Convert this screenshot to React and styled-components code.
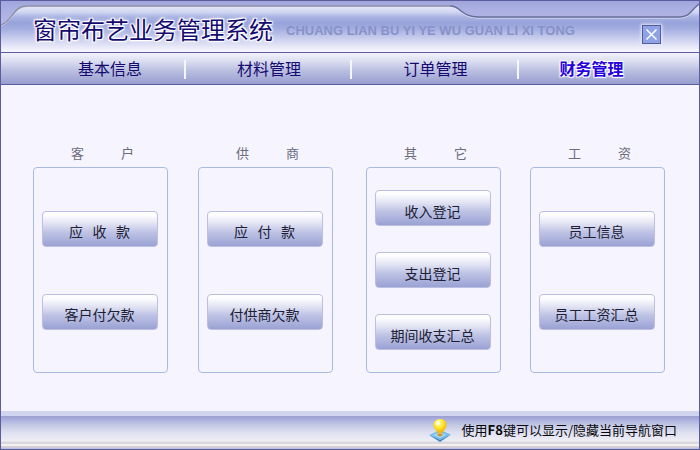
import React from "react";
import styled, { createGlobalStyle } from "styled-components";

const sans = '"Noto Sans CJK SC", "Liberation Sans", sans-serif';

const GlobalStyle = createGlobalStyle`
  *, *::before, *::after { box-sizing: border-box; }
  body { margin: 0; background: #f6f4fe; font-family: ${sans}; }
  button { font-family: inherit; cursor: pointer; }
`;

const Window = styled.div`
  min-height: 100vh;
  display: flex;
  flex-direction: column;
  border: 1px solid #5a5c9e;
  background: #f6f4fe;
`;

const Header = styled.header`
  position: relative;
  height: 52px;
  display: flex;
  align-items: center;
  padding: 4px 38px 0 32px;
  border-bottom: 1px solid #5a5c9e;
  background: linear-gradient(#e2e4f8 6px, #d2d6f2 11px, #aab4e2 16px, #96a2da 22px, #a4aee0 28px, #cfd3ef 39px, #f6f5fd 50px);
`;

const HeaderArt = styled.svg`
  position: absolute;
  top: 0;
  left: 0;
  width: 100%;
  height: 28px;
`;

const Title = styled.h1`
  position: relative;
  margin: 0;
  font-size: 24px;
  line-height: 32px;
  font-weight: 400;
  color: #140a70;
  white-space: nowrap;
  text-shadow: 0 0 1px #fff, 1px 1px 1px #fff, -1px -1px 1px #fff, 1px -1px 1px #fff,
    -1px 1px 1px #fff, 0 0 4px #fff;
`;

const Subtitle = styled.span`
  position: relative;
  margin: 4px 0 0 13px;
  font: bold 13px/20px "Liberation Sans", sans-serif;
  color: #8892c9;
  white-space: nowrap;
`;

const CloseButton = styled.button`
  position: relative;
  display: flex;
  align-items: center;
  justify-content: center;
  width: 19px;
  height: 19px;
  margin-left: auto;
  margin-top: 12px;
  padding: 0;
  border: 1px solid #555c9e;
  background: #8ea2e4;
  box-shadow: 0 0 3px 1px #e8ebff;
`;

const Nav = styled.nav`
  display: grid;
  grid-template-columns: 152fr 166fr 167fr 145fr;
  height: 32px;
  padding: 0 35px 0 33px;
  border-bottom: 1px solid #5a5c9e;
  background: linear-gradient(#f3f2fb, #dcdef1 8px, #b9bee0 18px, #989ed0);
`;

const NavItem = styled.button`
  position: relative;
  border: 0;
  padding: 0 0 2px;
  background: none;
  font-size: 16px;
  line-height: 24px;
  font-weight: ${(p) => (p.$active ? 700 : 400)};
  color: ${(p) => (p.$active ? "#2600dc" : "#140a70")};
  text-shadow: ${(p) =>
    p.$active ? "1px 1px 1px #fff, -1px -1px 1px #fff, 1px -1px 1px #fff, -1px 1px 1px #fff" : "none"};

  &:not(:last-child)::after {
    content: "";
    position: absolute;
    top: 7px;
    right: 0;
    width: 2px;
    height: 19px;
    background: #f6f6fd;
  }
`;

const Main = styled.main`
  flex: 1;
  display: grid;
  grid-template-columns: 165fr 168fr 164fr 135fr;
  align-content: start;
  padding: 58px 34px 36px 32px;
`;

const Group = styled.section`
  width: 135px;
`;

const GroupTitle = styled.h2`
  display: flex;
  justify-content: space-between;
  width: 63px;
  margin: 0 auto 4px 38px;
  font-size: 13px;
  line-height: 20px;
  font-weight: 400;
  color: #6c6d7c;
`;

const Panel = styled.div`
  display: flex;
  flex-direction: column;
  justify-content: center;
  align-items: center;
  gap: ${(p) => (p.$dense ? 26 : 47)}px;
  min-height: 206px;
  padding-right: 2px;
  border: 1px solid #a9bbe4;
  border-radius: 4px;
`;

const ActionButton = styled.button`
  width: 116px;
  height: 36px;
  padding: 5px 0 0;
  border: 1px solid #bcc0e0;
  border-radius: 4px;
  background: linear-gradient(#fefeff 3px, #e4e5f4 11px, #bfc4e5 20px, #9aa2d4);
  font-size: 14px;
  line-height: 20px;
  color: #202034;
  white-space: pre;
`;

const Footer = styled.footer`
  display: flex;
  align-items: center;
  justify-content: flex-end;
  gap: 10px;
  height: 38px;
  padding: 0 22px 6px 16px;
  border-top: 5px solid #d0d4ee;
  background: linear-gradient(#9a9fce, #acb2df 4px, #c7cce5 10px, #e0e1f1 17px, #efeef5 25px,
    #d8d8de 26px, #d8d8de 28px, #f5f2ee 28px, #f5f2ee 30px, #d6ced4 30px, #cfcbda 32px, #a8b4de 33px);
`;

const Hint = styled.p`
  margin: 0;
  font-size: 13px;
  line-height: 20px;
  color: #08080c;
  white-space: nowrap;
`;

const navItems = ["基本信息", "材料管理", "订单管理", "财务管理"];

const groups = [
  { title: "客户", actions: ["应   收   款", "客户付欠款"] },
  { title: "供商", actions: ["应   付   款", "付供商欠款"] },
  { title: "其它", actions: ["收入登记", "支出登记", "期间收支汇总"] },
  { title: "工资", actions: ["员工信息", "员工工资汇总"] },
];

function Bulb() {
  return (
    <svg width="24" height="24" viewBox="0 0 24 24" aria-hidden="true">
      <defs>
        <radialGradient id="glass" cx="0.4" cy="0.3" r="0.7">
          <stop offset="0" stopColor="#fffbb0" />
          <stop offset="0.5" stopColor="#ffe629" />
          <stop offset="1" stopColor="#eeb000" />
        </radialGradient>
      </defs>
      <path d="M1 17 12 12 23 16.5 12 23Z" fill="#79bdec" />
      <path d="M1 17 12 22 23 16.5 12 24Z" fill="#4388bd" />
      <path d="M5 17 12 14 18 17 12 20Z" fill="#a4d9f7" />
      <path d="M9.500 13h5v4.500q-2.500 2-5 0Z" fill="#c59b37" />
      <path d="M9.500 15h5" stroke="#f5dd87" />
      <path d="M12 1C8 1 5.500 3.500 5.500 7c0 3 2.500 4.500 3.500 7q3 1.500 6 0C16 11.500 18.500 10 18.500 7c0-3.500-2.500-6-6.500-6Z" fill="url(#glass)" />
      <ellipse cx="10" cy="5" rx="2" ry="2.500" fill="#fffde0" />
    </svg>
  );
}

export default function App() {
  return (
    <>
      <GlobalStyle />
      <Window>
        <Header>
          <HeaderArt viewBox="0 0 698 28" preserveAspectRatio="none" aria-hidden="true">
            <defs>
              <linearGradient id="band" x1="0" y1="0" x2="0" y2="1">
                <stop offset="0" stopColor="#9fa5dc" />
                <stop offset="0.3" stopColor="#aaafe2" />
                <stop offset="1" stopColor="#b5b9e4" />
              </linearGradient>
            </defs>
            <path d="M0 0H698V3C689 10 689 16 678 16H478C468 16 464 13 460 10Q455 5 449 5H26C12 5 12 20 0 24Z" fill="url(#band)" />
            <path d="M0 25C12 20 13 6 27 6H449Q455 6 460 11C464 14 468 17 478 17H678C689 17 689 11 698 4" fill="none" stroke="#dfe2f7" />
            <path d="M0 24C12 20 12 5 26 5H449" fill="none" stroke="#8f90a8" strokeWidth="1.500" />
            <path d="M449 5Q455 5 460 10C464 13 468 16 478 16H678C689 16 689 10 698 3" fill="none" stroke="#696e9c" strokeWidth="1.500" />
          </HeaderArt>
          <Title>窗帘布艺业务管理系统</Title>
          <Subtitle>CHUANG LIAN BU YI YE WU GUAN LI XI TONG</Subtitle>
          <CloseButton aria-label="关闭">
            <svg width="13" height="13" viewBox="0 0 13 13" aria-hidden="true">
              <path d="M1.500 1.500 11.500 11.500M11.500 1.500 1.500 11.500" stroke="#fff" strokeWidth="1.500" />
            </svg>
          </CloseButton>
        </Header>
        <Nav>
          {navItems.map((label, i) => (
            <NavItem key={label} $active={i === 3} aria-current={i === 3 ? "page" : undefined}>
              {label}
            </NavItem>
          ))}
        </Nav>
        <Main>
          {groups.map(({ title, actions }) => (
            <Group key={title} aria-label={title}>
              <GroupTitle>
                {[...title].map((char) => (
                  <span key={char}>{char}</span>
                ))}
              </GroupTitle>
              <Panel $dense={actions.length > 2}>
                {actions.map((action) => (
                  <ActionButton key={action}>{action}</ActionButton>
                ))}
              </Panel>
            </Group>
          ))}
        </Main>
        <Footer>
          <Bulb />
          <Hint>
            使用<b>F8</b>键可以显示/隐藏当前导航窗口
          </Hint>
        </Footer>
      </Window>
    </>
  );
}
